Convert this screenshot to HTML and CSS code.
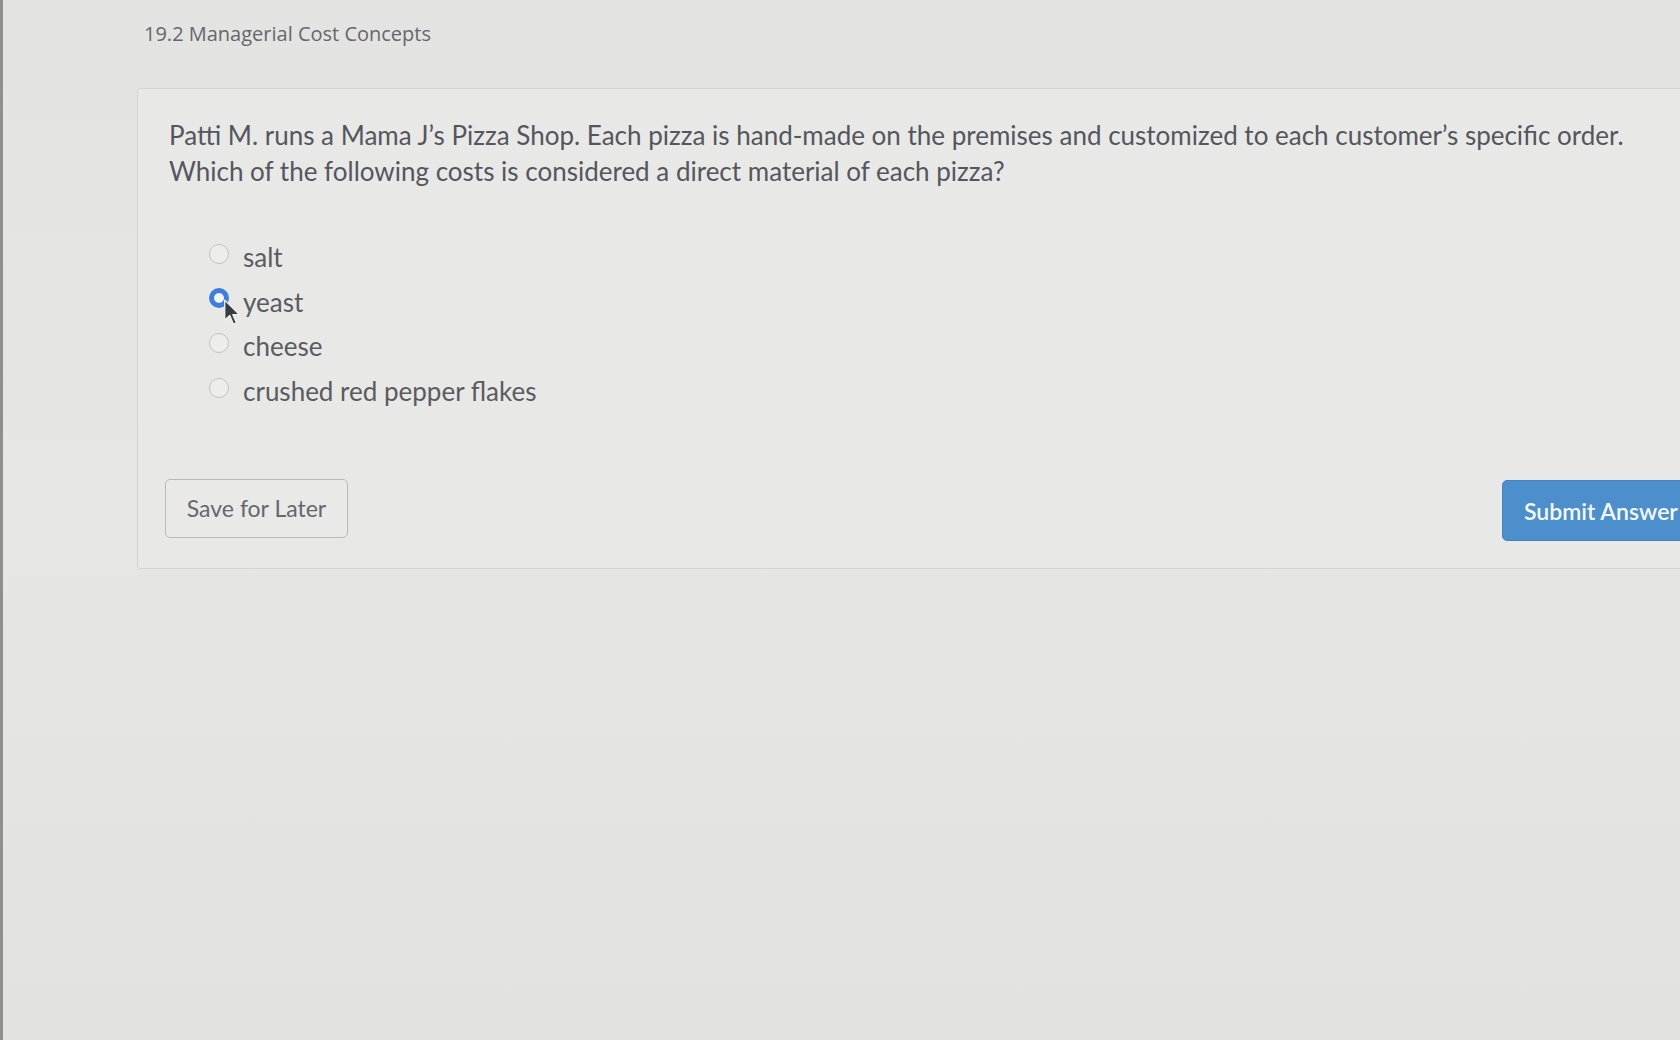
FILE: index.html
```html
<!DOCTYPE html>
<html>
<head>
<meta charset="utf-8">
<link rel="stylesheet" href="styles.css">
</head>
<body>
<div class="page">
  <div class="crumb">19.2 Managerial Cost Concepts</div>
  <div class="card">
    <p class="question">Patti M. runs a Mama J’s Pizza Shop. Each pizza is hand-made on the premises and customized to each customer’s specific order.<br>Which of the following costs is considered a direct material of each pizza?</p>
    <ul class="options">
      <li class="option"><span class="radio"></span><span class="label">salt</span></li>
      <li class="option"><span class="radio checked"></span><span class="label">yeast</span>
        <svg class="cursor" width="18" height="28" viewBox="0 0 16 25"><path d="M1.5 1 L1.5 19 L6 14.8 L9.3 22.5 L12 21.3 L8.8 14 L14.8 14 Z" fill="#3b3c40" stroke="#f0f0f0" stroke-width="1.2" stroke-linejoin="round"/></svg>
      </li>
      <li class="option"><span class="radio"></span><span class="label">cheese</span></li>
      <li class="option"><span class="radio"></span><span class="label">crushed red pepper flakes</span></li>
    </ul>
    <div class="actions">
      <button class="btn btn-save">Save for Later</button>
      <button class="btn btn-submit">Submit Answer</button>
    </div>
  </div>
</div>
</body>
</html>
```
FILE: styles.css
```css
html, body {
  margin: 0;
  padding: 0;
  height: 100%;
  overflow: hidden;
}
body {
  background: linear-gradient(180deg, #e3e3e1 0%, #e6e6e4 50%, #e2e2e0 100%);
  border-left: 3px solid #8f8f8d;
  box-sizing: border-box;
  font-family: Lato, "Open Sans", sans-serif;
}
.page {
  padding: 21px 0 0 140px;
  width: 1620px;
}
.crumb {
  font-family: "Open Sans", sans-serif;
  font-size: 20px;
  line-height: 26px;
  color: #66676b;
  margin-left: 1px;
}
.card {
  margin-top: 41px;
  margin-left: -6px;
  width: 1593px;
  border: 1px solid #d4d4d2;
  border-radius: 3px;
  background: #e8e8e6;
  padding: 28px 27px 27px;
  box-sizing: border-box;
}
.question {
  margin: 0;
  font-size: 26px;
  line-height: 36px;
  color: #54565e;
  padding-left: 4px;
  white-space: nowrap;
}
.options {
  list-style: none;
  margin: 46px 0 0;
  padding: 0 0 0 44px;
}
.option {
  display: flex;
  align-items: center;
  height: 44.6px;
  position: relative;
}
.radio {
  width: 20px;
  height: 20px;
  border: 1px solid #c2c2c1;
  border-radius: 50%;
  background: #ededeb;
  box-sizing: border-box;
  margin-right: 14px;
  flex: none;
  position: relative;
  top: -3px;
}
.radio.checked {
  border: 5.5px solid #3d7fe0;
  background: #f4f4f4;
  top: -4px;
}
.label {
  font-size: 26px;
  color: #5a5b61;
}
.cursor {
  position: absolute;
  left: 14px;
  top: 19px;
}
.actions {
  display: flex;
  justify-content: space-between;
  margin-top: 66px;
}
.btn {
  font-family: Lato, sans-serif;
  font-size: 23px;
  height: 59px;
  border-radius: 5px;
  box-sizing: border-box;
  padding: 0 20px;
}
.btn-save {
  width: 183px;
  background: #e9e9e7;
  border: 1.5px solid #b9b9b8;
  color: #66676c;
  padding: 0 0 2px;
}
.btn-submit {
  width: 200px;
  background: #4c8fcc;
  border: 1px solid #4483bf;
  color: #f4f8fc;
  text-align: left;
  padding-left: 21px;
  font-weight: 600;
  height: 61px;
  margin-top: 1px;
  white-space: nowrap;
}
```
